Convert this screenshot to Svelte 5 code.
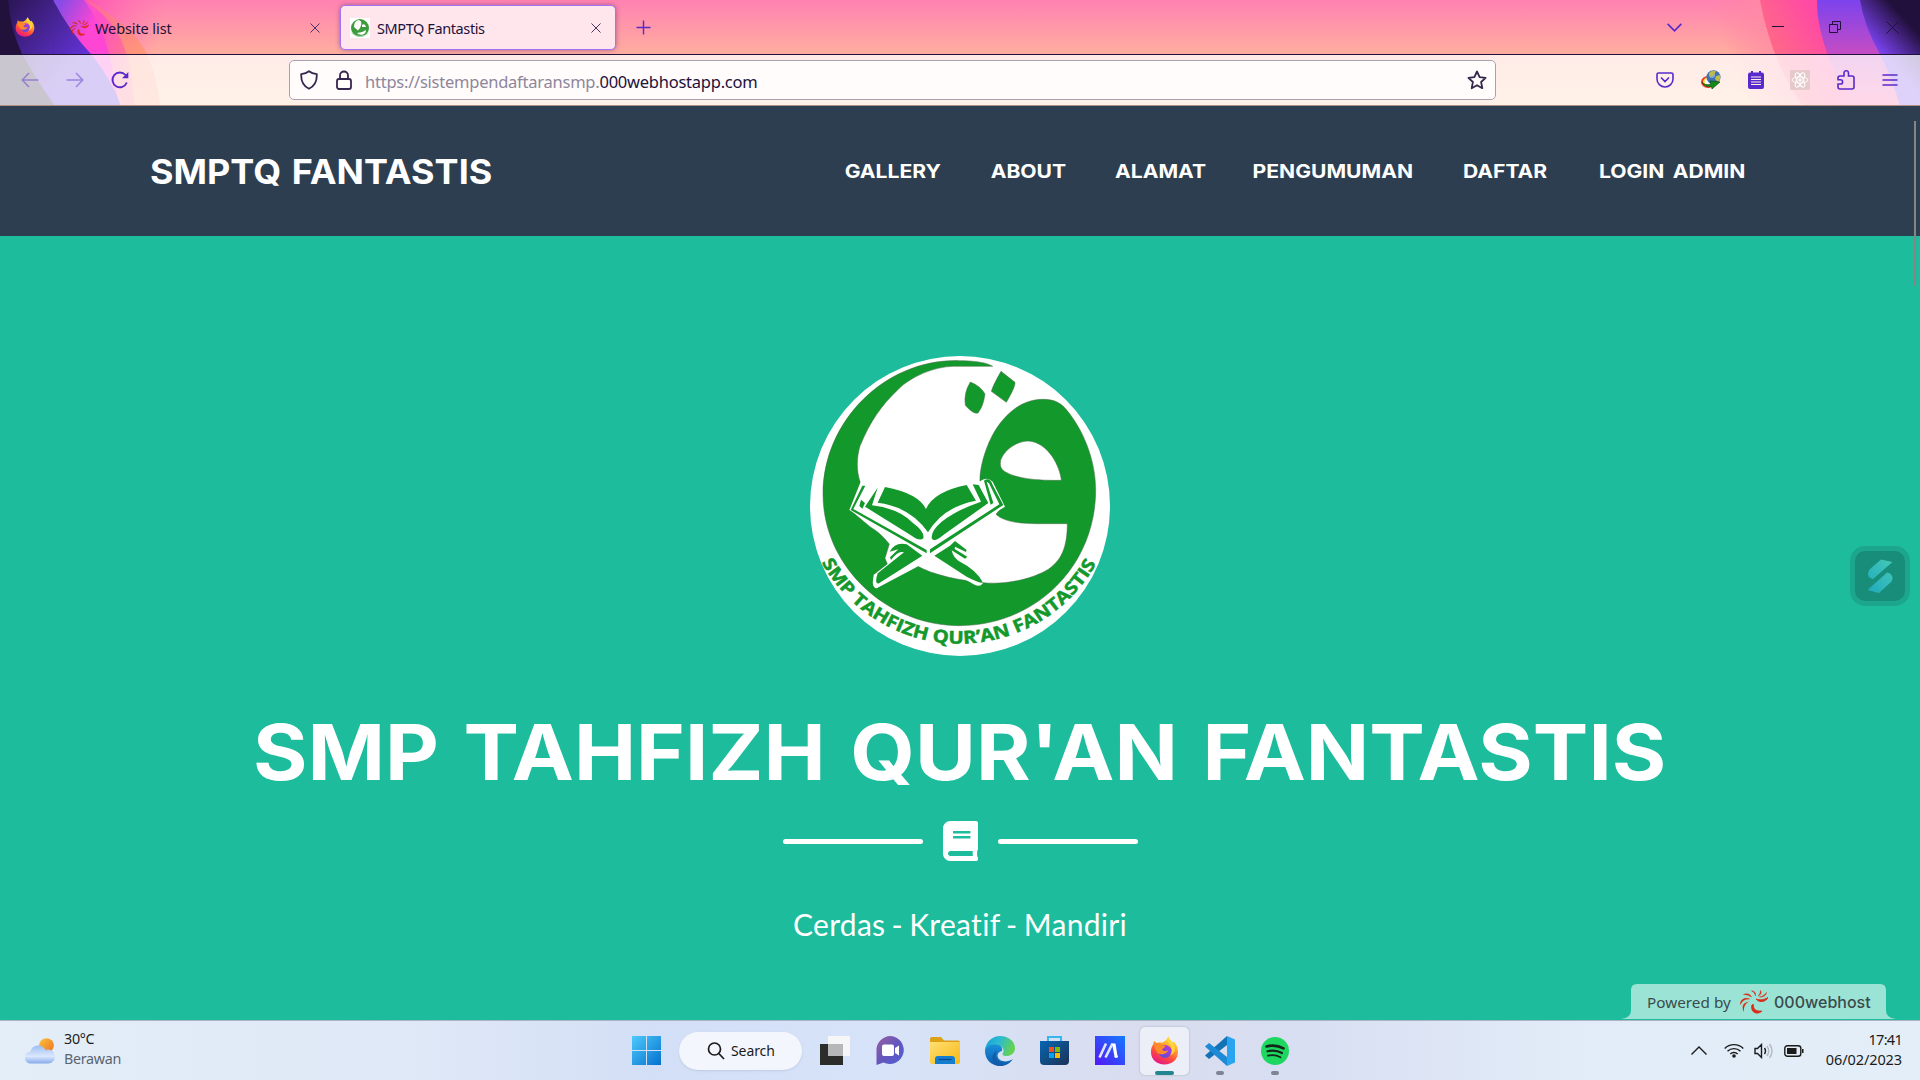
<script>
  const links = ['Gallery', 'About', 'Alamat', 'Pengumuman', 'Daftar', 'Login Admin'];
</script>

{#snippet firefox()}
  <svg viewBox="0 0 30 30" class="fit">
    <defs>
      <linearGradient id="fxa" x1=".8" y1="0" x2=".3" y2="1">
        <stop offset="0" stop-color="#fff44f" /><stop offset=".35" stop-color="#ffa52a" />
        <stop offset=".68" stop-color="#ff4a3f" /><stop offset="1" stop-color="#e5148a" />
      </linearGradient>
      <linearGradient id="fxb" x1=".8" y1="0" x2=".2" y2="1">
        <stop offset="0" stop-color="#b833e1" /><stop offset="1" stop-color="#5b4fd6" />
      </linearGradient>
    </defs>
    <path d="M19 .5c1 3 3 4.500 4.500 6.500.6-.2.700-1 .500-1.800 3 2.500 5 6.500 5 11.300C29 24 23 29.500 15 29.500S1 24 1 16.500c0-3.500 1-6 2.400-8 .1-1.500.4-2.600 1-3.500.8 1.200 1.700 2 3 2.300C9 6.500 10.500 6.700 12 7c3-.6 4.500-2.500 7-6.500z" fill="url(#fxa)" />
    <circle cx="15.500" cy="16" r="6.800" fill="url(#fxb)" />
    <path d="M5 8c3-1.500 6-.6 7.500 1.500 1.500.4 3 .2 3.500 1-.5 1.800-3 1.800-3.500 3.500.8 2 4 2 6.500.5-1 4-7 6-11 3C5.500 15 4 11 5 8z" fill="#ff8a2a" />
    <path d="M19 .5c-2 3-1 6 1.500 8.500 3 3 3 8 0 11 6-2 7-8 3-13C22 5 20 3.500 19 .5z" fill="#ffd53c" />
  </svg>
{/snippet}

{#snippet swirl()}
  <svg viewBox="0 0 28 24" class="fit">
    <g fill="#dc2a17">
      <path d="M28 7.500c-2 4-8 6-12 1.500 4 1.500 8 1 12-1.500z" stroke="#dc2a17" stroke-width=".9" />
      <path d="M22 21c-4 4-11 2.500-10.500-5 .6-1.500 1.500-2 2-1.500C13 19 16 21.500 22 21z" stroke="#dc2a17" stroke-width=".7" />
      <path d="M4 22c-3-5-1-10 5.500-10.500C5 13.500 3.500 17 4 22z" />
      <path d="M.3 14.500C.5 9.500 4.500 7 9.500 9 5 8.800 2.500 10.500.3 14.500zM3.500 4.500c3.500-1.500 6.500-.5 8 2.500-2.500-1.700-5-2.500-8-2.500zM11.500.8c3 .2 4.500 2 4 5-.6-2.300-1.700-3.800-4-5zM20.500.5c1.500 2 .3 4.300-2.300 5.500 1.500-1.700 2.300-3.300 2.300-5.500zM26.500 2.500c-.5 3.200-3.300 4.900-7 4.500 3-.6 5.200-2 7-4.500z" stroke="#dc2a17" stroke-width=".5" />
    </g>
  </svg>
{/snippet}

<div class="screen">
  <section class="browser">
    <svg class="art" viewBox="0 0 1920 106" preserveAspectRatio="none">
      <defs>
        <linearGradient id="sky" x1="0" y1="0" x2="0" y2="1"><stop offset="0" stop-color="#ff82b2" /><stop offset=".5" stop-color="#ffad9f" /><stop offset="1" stop-color="#ffc59f" /></linearGradient>
        <linearGradient id="pl" gradientUnits="userSpaceOnUse" x1="85" y1="0" x2="165" y2="20"><stop offset="0" stop-color="#ff55b4" /><stop offset="1" stop-color="#ff6fb0" stop-opacity="0" /></linearGradient>
        <linearGradient id="ol" gradientUnits="userSpaceOnUse" x1="100" y1="0" x2="135" y2="54"><stop offset="0" stop-color="#ff6f92" /><stop offset="1" stop-color="#ff946f" /></linearGradient>
        <linearGradient id="il" gradientUnits="userSpaceOnUse" x1="96" y1="30" x2="134" y2="46"><stop offset="0" stop-color="#ff4bd0" /><stop offset="1" stop-color="#ff6f90" /></linearGradient>
        <linearGradient id="pu" gradientUnits="userSpaceOnUse" x1="10" y1="0" x2="80" y2="60"><stop offset="0" stop-color="#2c1657" /><stop offset="1" stop-color="#6232d4" /></linearGradient>
        <linearGradient id="vi" gradientUnits="userSpaceOnUse" x1="58" y1="5" x2="92" y2="25"><stop offset="0" stop-color="#854ce6" /><stop offset="1" stop-color="#ff45d4" /></linearGradient>
        <linearGradient id="rb" gradientUnits="userSpaceOnUse" x1="1715" y1="20" x2="1775" y2="0"><stop offset="0" stop-color="#ff7fa0" stop-opacity="0" /><stop offset="1" stop-color="#ff8ca5" /></linearGradient>
        <linearGradient id="rp" gradientUnits="userSpaceOnUse" x1="1762" y1="40" x2="1812" y2="10"><stop offset="0" stop-color="#ff6b85" /><stop offset="1" stop-color="#ff4aa4" /></linearGradient>
        <linearGradient id="rv" x1="0" y1="0" x2="0" y2="1"><stop offset="0" stop-color="#7c43ee" /><stop offset=".5" stop-color="#c44cc4" /><stop offset="1" stop-color="#ff5ea0" /></linearGradient>
        <linearGradient id="rd" gradientUnits="userSpaceOnUse" x1="1876" y1="45" x2="1905" y2="19"><stop offset="0" stop-color="#7740e8" /><stop offset="1" stop-color="#22103c" /></linearGradient>
      </defs>
      <path fill="url(#sky)" d="M0 0h1920v106H0z" />
      <path fill="url(#pl)" d="M52 0h130v54H92z" />
      <path fill="url(#ol)" opacity=".8" d="M88 0q24 15 38 27 14 13 21 27 11 24 13 52h-36z" />
      <path fill="url(#il)" opacity=".85" d="M84 0q26 16 38 42 12 28 12 64h-14L70 20z" />
      <path fill="url(#vi)" d="M52 0h32q17 22 25 54l11 52h-10z" />
      <path fill="url(#pu)" d="M0 0h53q17 32 38 54 20 24 30 52H0z" />
      <path fill="#22113b" d="M0 0h8q2 28 14 54 16 28 33 52H0z" />
      <path fill="url(#rb)" d="M1700 0h220v106h-160q-35-20-60-106z" />
      <path fill="url(#rp)" d="M1760 0h160v106h-117q-32-45-43-106z" />
      <path fill="url(#rv)" d="M1817 0h50l40 106h-56q-35-65-34-106z" />
      <path fill="url(#rd)" d="M1860 0h60v106h-20q-8-28-20-52-16-28-20-54z" />
    </svg>

    <header class="tabs">
      <span class="brandmark">{@render firefox()}</span>
      <div class="tab">
        <span class="fav">{@render swirl()}</span><span class="t1">Website list</span>
        <svg class="x" viewBox="0 0 10 10"><path d="M.5.500l9 9M9.500.5l-9 9" /></svg>
      </div>
      <div class="tab active">
        <span class="fav school">
          <svg viewBox="0 0 20 20" class="fit"><circle cx="10" cy="10" r="9" fill="#3d9d3d" /><path d="M7 2.500c4-1 5 2 4 5-.5 2-2 4-3 5L4 9c0-3 1-5.500 3-6.500zM12 7q3-2 4 2l-4 0zM7 15q5 0 9-3 0 3-3 4.500-4 1-6-1.500z" fill="#fff" /><path d="M1.500 15Q10 22 18.500 15" stroke="#b9dcb9" fill="none" /></svg>
        </span><span class="t2">SMPTQ Fantastis</span>
        <svg class="x" viewBox="0 0 10 10"><path d="M.5.500l9 9M9.500.5l-9 9" /></svg>
      </div>
      <svg class="plus" viewBox="0 0 16 16"><path d="M8 .5v15M.5 8h15" /></svg>
      <div class="window">
        <svg class="down" viewBox="0 0 16 9"><path d="M.7.700L8 8 15.300.700" /></svg>
        <svg width="12" height="12" viewBox="0 0 12 12"><path d="M0 5.500h12" /></svg>
        <svg width="12" height="12" viewBox="0 0 12 12"><path d="M.5 3.500h8v8h-8zM3.500 3.500v-3h8v8h-3" /></svg>
        <svg width="13" height="13" viewBox="0 0 13 13"><path d="M.5.500l12 12M12.500.5l-12 12" /></svg>
      </div>
    </header>

    <div class="toolbar">
      <div class="history">
        <svg class="dim" viewBox="0 0 18 16"><path d="M17.500 8H1.500M8 1L1.200 8 8 15" /></svg>
        <svg class="dim" viewBox="0 0 18 16"><path d="M.5 8h16M10 1l6.800 7L10 15" /></svg>
        <svg class="reload" viewBox="0 0 18 18"><path d="M15.800 11.500A7.400 7.400 0 1 1 14.500 4" /><path d="M17.300 1v6.300h-6.300z" fill="#592acb" stroke="none" /></svg>
      </div>
      <div class="address">
        <svg class="shield" viewBox="0 0 18 20"><path d="M9 1.200c2.500 2 4.800 2.500 7.800 2.900.3 6.500-1 11.500-7.800 14.700C2.200 15.600.9 10.600 1.200 4.100 4.200 3.700 6.500 3.200 9 1.200z" /></svg>
        <svg class="lock" viewBox="0 0 16 20"><path d="M4 9V5.500a4 4 0 0 1 8 0V9" /><rect x="1" y="9" width="14" height="10" rx="2" /></svg>
        <span class="url">https://sistempendaftaransmp.<b>000webhostapp.com</b></span>
        <svg class="star" viewBox="0 0 20 20"><path d="M10 1.500l2.600 5.600 6 .7-4.500 4.200 1.200 6.200-5.300-3-5.300 3L5.900 12 1.400 7.800l6-.7z" /></svg>
      </div>
      <div class="addons">
        <svg width="18" height="16" viewBox="0 0 18 16"><path d="M2.500 1h13a1.500 1.500 0 0 1 1.500 1.500V7a8 8 0 0 1-16 0V2.500A1.500 1.500 0 0 1 2.500 1zM5 5.500l4 4 4-4" /></svg>
        <svg class="solid" width="20" height="20" viewBox="0 0 20 20">
          <ellipse cx="7" cy="12" rx="7" ry="6" fill="#e93b24" /><ellipse cx="7.500" cy="12" rx="5.500" ry="4.700" fill="#ffe04a" /><ellipse cx="8" cy="12" rx="4" ry="3.300" fill="#fff" />
          <circle cx="12.500" cy="7.300" r="7" fill="#3f70b4" /><circle cx="11" cy="5" r="3" fill="#9fc3ea" opacity=".7" /><path d="M8 3q3-3 7-2l-2 4-4 2zM15 6l4-1q1 4-2 7l-3-3z" fill="#c0bb45" />
          <path d="M1 12q3 4 9 2l-1-3 10 1-8 7-.5-2.500Q4 18 1 12z" fill="#138a16" stroke="#07450b" stroke-width=".6" />
        </svg>
        <svg class="solid" width="16" height="18" viewBox="0 0 16 18"><path d="M2 1.500h1V0h2v1.500h6V0h2v1.500h1a2 2 0 0 1 2 2V16a2 2 0 0 1-2 2H2a2 2 0 0 1-2-2V3.500a2 2 0 0 1 2-2z" fill="#592acb" /><path d="M3 6h10M3 8.500h10M3 11h10M3 13.500h10" stroke="#fff0e8" /></svg>
        <svg class="solid" width="20" height="20" viewBox="0 0 20 20"><rect width="20" height="20" rx="1" fill="#e5c9cb" /><g fill="none" stroke="#fff" stroke-width=".9"><ellipse cx="10" cy="10" rx="8" ry="3" /><ellipse cx="10" cy="10" rx="8" ry="3" transform="rotate(60 10 10)" /><ellipse cx="10" cy="10" rx="8" ry="3" transform="rotate(120 10 10)" /></g><circle cx="10" cy="10" r="1.500" fill="#fff" /></svg>
        <svg width="18" height="20" viewBox="0 0 18 20"><path d="M7 5V3a2 2 0 0 1 4.500 0v3H15a2 2 0 0 1 2 2v9a2 2 0 0 1-2 2H3a2 2 0 0 1-2-2v-3h2.500a2 2 0 0 0 0-4.200H1V8a2 2 0 0 1 2-2h4z" /></svg>
        <svg width="16" height="12" viewBox="0 0 16 12"><path d="M.5 1h15M.5 6h15M.5 11h15" /></svg>
      </div>
    </div>
  </section>

  <nav class="nav">
    <span class="brand">SMPTQ FANTASTIS</span>
    <ul>{#each links as link}<li>{link}</li>{/each}</ul>
  </nav>

  <main class="hero">
    <svg class="logo" viewBox="60 48 900 900">
      <defs><path id="arc" d="M92 662A472 472 0 0 0 924 662" /></defs>
      <circle cx="510" cy="498" r="450" fill="#fff" />
      <g fill="#13982b" stroke="#4c6b4c" stroke-width="1.500">
        <path d="M608 79C590 66 545 62 508 62 290 55 99 240 99 462 99 680 290 857 508 857 735 857 917 680 917 450 917 360 880 270 830 210 806 180 780 178 755 178 690 180 640 225 605 290 580 340 568 395 570 425L640 495 618 523C640 545 690 551 740 551H832C831 610 822 655 775 688 730 715 660 733 590 729 510 722 430 706 378 676L255 745 250 705 292 672 285 655 298 612C280 590 265 575 240 560L180 510 212 430C198 395 200 350 210 318 240 245 275 195 325 148 360 112 430 80 490 79z" />
        <path d="M541 126Q572 138 585 162 580 200 564 219 550 224 526 196 520 160 541 126zM633 94L675 127Q677 140 649 187L604 154Q608 138 633 94z" />
      </g>
      <path d="M632 360C645 325 685 303 715 303 775 307 810 380 814 421 740 422 680 416 645 395 630 385 630 375 632 360z" fill="#fff" stroke="#4c6b4c" stroke-width="1.500" />
      <path d="M212 425L178 510 410 645 645 500 608 425Q590 408 570 424L410 490 285 430z" fill="#fff" />
      <path d="M298 625Q310 608 340 610L408 640 440 645 490 604Q520 615 533 630L530 655 505 650 580 725Q575 742 555 735L420 660 260 745Q242 742 252 705L295 672z" fill="#fff" />
      <g fill="#13982b">
        <path d="M285 441Q385 460 408 507 430 455 530 435L558 482Q460 500 414 577 360 500 263 488z" />
        <path d="M263 443L246 496Q325 505 368 548 405 575 400 595 390 605 365 587L225 500zM548 433L573 485Q500 510 455 545 420 575 426 597 435 607 460 585L595 489 566 435z" />
        <path d="M217 437h9L190 507 410 630v10L182 510zM213 479l12 10-8 17-9-8z" />
        <path d="M582 422Q600 410 608 435L640 495 420 640v-12L628 493 597 430 590 425 610 489 602 494z" />
        <path d="M299 635Q315 605 350 613L397 647 267 730Q252 735 263 700L310 662 342 637Q325 630 303 660L300 652 325 628zM433 647L480 617 495 603 530 630 528 636 495 620 494 627 532 650 525 656 485 631Q490 655 510 665 560 690 579 728 570 731 530 710z" />
      </g>
      <text class="motto"><textPath href="#arc" startOffset="6" textLength="1002" lengthAdjust="spacingAndGlyphs">SMP TAHFIZH QUR’AN FANTASTIS</textPath></text>
    </svg>
    <h1>SMP TAHFIZH QUR'AN FANTASTIS</h1>
    <div class="divider">
      <i></i>
      <svg width="35" height="40" viewBox="0 0 448 512"><path fill="#fff" d="M448 360V24c0-13.300-10.700-24-24-24H96C43 0 0 43 0 96v320c0 53 43 96 96 96h328c13.300 0 24-10.700 24-24v-16c0-7.500-3.500-14.300-8.900-18.700-4.200-15.400-4.200-59.300 0-74.700 5.400-4.300 8.900-11.100 8.900-18.600zM128 134c0-3.300 2.700-6 6-6h212c3.300 0 6 2.700 6 6v20c0 3.300-2.700 6-6 6H134c-3.300 0-6-2.700-6-6v-20zm0 64c0-3.300 2.700-6 6-6h212c3.300 0 6 2.700 6 6v20c0 3.300-2.700 6-6 6H134c-3.300 0-6-2.700-6-6v-20zm253.400 250H96c-17.700 0-32-14.300-32-32 0-17.600 14.400-32 32-32h285.400c-1.900 17.100-1.900 46.900 0 64z" /></svg>
      <i></i>
    </div>
    <p>Cerdas - Kreatif - Mandiri</p>

    <div class="scroll"></div>
    <div class="widget">
      <svg width="26" height="34" viewBox="0 0 26 34"><defs><linearGradient id="wg" x1="1" y1="0" x2="0" y2="1"><stop offset="0" stop-color="#45c9b6" /><stop offset="1" stop-color="#1fa9bd" /></linearGradient></defs><path fill="url(#wg)" d="M14 .5L25.500 3 6 20Q1 19 1 14.500 1 12 3 10zM20 13.500q5.500 1 5.500 6 0 2-2 4L12 34 .5 31z" /></svg>
    </div>
    <div class="powered">
      <svg class="plate" viewBox="0 0 275 35"><path d="M0 35q10-1 10-9V6q0-6 6-6h243q6 0 6 6v20q0 8 10 9z" fill="#9be4d5" /></svg>
      <span class="by">Powered by</span><span class="sw">{@render swirl()}</span><span class="host">000webhost</span>
    </div>
  </main>

  <footer class="taskbar">
    <div class="weather">
      <svg width="30" height="26" viewBox="0 0 30 26">
        <defs><linearGradient id="sun" x1="0" y1="0" x2="1" y2="1"><stop offset="0" stop-color="#f9c23c" /><stop offset="1" stop-color="#f3701f" /></linearGradient><linearGradient id="cl" x1="0" y1="0" x2="0" y2="1"><stop offset="0" stop-color="#9dbdf0" /><stop offset=".6" stop-color="#dbe8ff" /><stop offset="1" stop-color="#86a9ea" /></linearGradient></defs>
        <circle cx="21.500" cy="7.500" r="7.300" fill="url(#sun)" /><path d="M6 25.500a6 6 0 0 1-.5-12 8 8 0 0 1 15-1.500 7 7 0 1 1 3 13.500z" fill="url(#cl)" />
      </svg>
      <div class="report"><span class="deg">30°C</span><span class="sky">Berawan</span></div>
    </div>

    <div class="apps">
      <span class="app"><svg width="29" height="29" viewBox="0 0 29 29"><defs><linearGradient id="win" gradientUnits="userSpaceOnUse" x1="0" y1="0" x2="29" y2="29"><stop offset="0" stop-color="#4ccbfb" /><stop offset="1" stop-color="#0670cf" /></linearGradient></defs><path fill="url(#win)" d="M0 0h14v14H0zM15 0h14v14H15zM0 15h14v14H0zM15 15h14v14H15z" /></svg></span>
      <span class="search"><svg width="18" height="18" viewBox="0 0 18 18"><circle cx="7.500" cy="7" r="6" /><path d="M11.800 11.500L17 17" /></svg>Search</span>
      <span class="app"><svg width="30" height="29" viewBox="0 0 30 29"><path fill="#2c2c2b" d="M0 8h23v21H0z" /><path fill="#f6f6f6" d="M8 0h22v20H8z" /><path fill="#b6b7b9" d="M8 8h15v12H8z" /></svg></span>
      <span class="app"><svg width="30" height="29" viewBox="0 0 30 29"><defs><linearGradient id="chat" x1="0" y1="0" x2="1" y2="1"><stop offset="0" stop-color="#9c5f9f" /><stop offset=".5" stop-color="#6457bd" /><stop offset="1" stop-color="#505fd8" /></linearGradient></defs><path fill="url(#chat)" d="M15.500 0a14 14 0 1 1-7 26.500L1.500 29V15A14 14 0 0 1 15.500 0z" /><rect x="7" y="8.500" width="12" height="11.500" rx="2" fill="#fff" /><path d="M20 12l4-2.500v10L20 17z" fill="#fff" /></svg></span>
      <span class="app"><svg width="30" height="27" viewBox="0 0 30 27"><defs><linearGradient id="fold" x1="0" y1="0" x2="1" y2="1"><stop offset="0" stop-color="#ffdf72" /><stop offset="1" stop-color="#f7b815" /></linearGradient></defs><path fill="#dea014" d="M2 0h9l3 3.500h14a2 2 0 0 1 2 2V12H0V2a2 2 0 0 1 2-2z" /><path fill="url(#fold)" d="M0 5h30v20a2 2 0 0 1-2 2H2a2 2 0 0 1-2-2z" /><path fill="#137ed0" d="M5 27v-5q0-3 3-3h14q3 0 3 3v5z" /><path d="M8.500 22.500h13" stroke="#084b8a" stroke-width="1.200" /></svg></span>
      <span class="app"><svg width="30" height="30" viewBox="0 0 30 30"><defs><linearGradient id="eg" x1="0" y1="0" x2="1" y2=".3"><stop offset="0" stop-color="#159ed4" /><stop offset=".5" stop-color="#2cbbd2" /><stop offset="1" stop-color="#62d252" /></linearGradient><linearGradient id="eb" x1="0" y1="0" x2="0" y2="1"><stop offset="0" stop-color="#1b94dd" /><stop offset="1" stop-color="#0b5cae" /></linearGradient></defs><path fill="url(#eb)" d="M0 15C0 8 6 7 10 7c6 1 8 5 7 8-5 1-6 6-2 9 4 2.500 9 1.500 13-1-3 4.500-7.500 7-13 7C6.500 30 0 23.500 0 15z" /><path fill="url(#eg)" d="M.3 13C1.300 5.500 7.500 0 15 0c9 0 15 6 15 12 0 5.500-4.500 8-8.500 8-3 0-5-1.300-3.500-3 2-3-1-8-7-8.500C6 8 2 10 .3 13z" /><path fill="#155ca8" d="M12 14c-4 7 1 15 9 14.500Q16 31 11 29 3 22 12 14z" /></svg></span>
      <span class="app"><svg width="29" height="29" viewBox="0 0 29 29"><defs><linearGradient id="st" x1="0" y1="0" x2="1" y2="1"><stop offset="0" stop-color="#0667b3" /><stop offset="1" stop-color="#1d3156" /></linearGradient></defs><path d="M8 6V1h13v5" fill="none" stroke="#35b6ec" stroke-width="2" /><path fill="url(#st)" d="M0 5h29v20a4 4 0 0 1-4 4H4a4 4 0 0 1-4-4z" /><path fill="#f25022" d="M9 11h5v5H9z" /><path fill="#7fba00" d="M15 11h5v5h-5z" /><path fill="#00a4ef" d="M9 17h5v5H9z" /><path fill="#ffb900" d="M15 17h5v5h-5z" /></svg></span>
      <span class="app"><svg width="30" height="29" viewBox="0 0 30 29"><defs><linearGradient id="ma" x1="0" y1="1" x2="1" y2="0"><stop offset="0" stop-color="#5316f5" /><stop offset="1" stop-color="#147bff" /></linearGradient></defs><path fill="url(#ma)" d="M0 0h30v29H0z" /><path d="M4.500 21.500L11 7.500M10.500 21.500l7-14" stroke="#dfe5ff" stroke-width="2.600" /><path d="M17 7.500h3.500l2.200 14h-3z" fill="#fff" /><circle cx="21.200" cy="20.300" r="1.500" fill="#fff" /></svg></span>
      <span class="app open"><span class="ff">{@render firefox()}</span></span>
      <span class="app run"><svg width="30" height="30" viewBox="0 0 30 30"><path fill="#1173b8" d="M22 0v9L4 23 0 19.500z" /><path fill="#1c8ad6" d="M22 30v-9L4 7 0 10.500z" /><path fill="#29a4f0" d="M22 0l8 3.500v23L22 30z" /></svg></span>
      <span class="app run"><svg width="28" height="28" viewBox="0 0 28 28"><circle cx="14" cy="14" r="14" fill="#1ed760" /><g fill="none" stroke="#14251a" stroke-linecap="round"><path d="M5.500 9.500q9-2.500 17 1.800" stroke-width="2.600" /><path d="M6.500 14.300q8-2 14.500 1.700" stroke-width="2.200" /><path d="M7 18.700q7-1.500 12.500 1.500" stroke-width="1.800" /></g></svg></span>
    </div>

    <div class="tray">
      <svg width="16" height="9" viewBox="0 0 16 9"><path d="M.5 8.500L8 1l7.500 7.500" /></svg>
      <svg width="20" height="15" viewBox="0 0 20 15"><path d="M.7 5.500a13 13 0 0 1 18.600 0M3.500 8.300a9.200 9.200 0 0 1 13 0M6.300 11a5.200 5.200 0 0 1 7.400 0" /><circle cx="10" cy="13" r="1.800" fill="#1b1b1b" stroke="none" /></svg>
      <svg width="20" height="16" viewBox="0 0 20 16"><path d="M1 5.500h2.500l4-4v13l-4-4H1zM10.500 5q2 3 0 6" /><path d="M13 3q3.500 5 0 10M15.500 1q5 7 0 14" stroke="#b3bac4" /></svg>
      <svg width="20" height="12" viewBox="0 0 20 12"><rect x=".8" y=".8" width="16" height="10.400" rx="2.500" /><path d="M3 3h9.500v6H3zM18 4h1.500v4H18z" fill="#1b1b1b" stroke="none" /></svg>
      <div class="clock"><span class="time">17:41</span><span class="date">06/02/2023</span></div>
    </div>
  </footer>
</div>

<style>
  :global(body) { margin: 0; overflow: hidden; }
  .screen { width: 1920px; height: 1080px; display: flex; flex-direction: column; font-family: "Noto Sans", "Open Sans", sans-serif; overflow: hidden; }
  svg { display: block; flex: none; }
  .fit { width: 100%; height: 100%; }

  .browser { position: relative; height: 106px; flex: none; }
  .art { position: absolute; inset: 0; width: 1920px; height: 106px; }
  .tabs, .toolbar { position: relative; display: flex; align-items: center; box-sizing: border-box; }
  .tabs { height: 55px; border-bottom: 1px solid #22113b; padding-left: 15px; }
  .brandmark { width: 20px; height: 20px; margin-right: 18px; }
  .tab { width: 276px; height: 45px; box-sizing: border-box; display: flex; align-items: center; color: #22113b; font-size: 14.500px; }
  .tab:not(.active) { width: 287px; height: 54px; padding: 2px 20px 0 16px; border-left: 1px solid #4a2a8a66; }
  .active { background: #ffe6ec; border: 1.500px solid #a274f5; border-radius: 5px; box-shadow: 0 0 5px #7b3f80aa; padding: 1px 14px 0 9px; margin-top: 1px; }
  .fav { width: 19px; height: 18px; margin-right: 6px; }
  .school { width: 20px; height: 20px; background: #fff; margin-right: 7px; }
  .t1 { letter-spacing: -.1px; }
  .t2 { letter-spacing: -.4px; }
  .x { width: 10px; height: 10px; margin-left: auto; stroke: #4c3560; fill: none; }
  .plus { width: 15px; height: 15px; margin-left: 20px; margin-top: 1px; stroke: #592acb; stroke-width: 1.500; fill: none; }
  .window { margin-left: auto; display: flex; align-items: center; padding-right: 21px; }
  .window svg { fill: none; stroke: #22113b; margin-right: 45px; }
  .window svg:last-child { margin-right: 0; }
  .window .down { width: 15px; height: 9px; stroke: #592acb; stroke-width: 1.800; margin-right: 90px; }

  .toolbar { height: 51px; background: #ffffffc2; border-bottom: 1px solid #b08d80; padding: 0 22px 0 21px; }
  .history { display: flex; align-items: center; gap: 27px; width: 268px; }
  .history svg { width: 18px; height: 16px; fill: none; stroke: #592acb; stroke-width: 1.500; }
  .history .dim { opacity: .45; }
  .history .reload { height: 18px; stroke-width: 1.900; }
  .address { width: 1207px; height: 40px; box-sizing: border-box; border: 1px solid #aaa0b4; border-radius: 5px; background: #fffcfb; display: flex; align-items: center; padding: 0 8px 0 10px; }
  .address svg { fill: none; stroke: #35264d; stroke-width: 1.800; stroke-linejoin: round; }
  .shield { width: 18px; height: 20px; margin-right: 18px; }
  .lock { width: 16px; height: 20px; margin-right: 13px; }
  .url { font-size: 16.500px; letter-spacing: -.24px; color: #8e869b; padding-top: 2px; }
  .url b { font-weight: 400; color: #22113b; }
  .star { width: 20px; height: 20px; margin-left: auto; }
  .addons { flex: 1; display: flex; align-items: center; justify-content: space-between; padding-left: 160px; }
  .addons svg { fill: none; stroke: #592acb; stroke-width: 1.600; }
  .addons .solid { stroke: none; stroke-width: 1; }

  .nav { height: 130px; flex: none; box-sizing: border-box; background: #2c3e50; color: #fff; display: flex; align-items: center; justify-content: space-between; padding: 0 174px 0 150px; font-family: Inter, sans-serif; font-weight: 700; }
  .brand { font-size: 34px; word-spacing: 2px; transform: scaleX(1.058); transform-origin: left; }
  .nav ul { list-style: none; margin: 0; padding: 0; display: grid; grid-template-columns: 131.500px 112px 124px 189.500px 122.500px 132.500px; font-size: 19px; word-spacing: 3px; white-space: nowrap; text-transform: uppercase; transform: scaleX(1.11); transform-origin: right; }

  .hero { position: relative; flex: 1; min-height: 0; background: #1cbc9c; color: #fff; display: flex; flex-direction: column; align-items: center; }
  .logo { width: 300px; height: 300px; margin-top: 120px; }
  .motto { font: 700 53px "Open Sans", sans-serif; fill: #13982b; stroke: #13982b; stroke-width: 1.500; }
  h1 { margin: 48px 0 0; font: 700 77px/96px Inter, sans-serif; white-space: nowrap; word-spacing: 4.500px; transform: scaleX(1.081); }
  .divider { display: flex; align-items: center; gap: 20px; margin-top: 21px; }
  .divider i { width: 140px; height: 5px; border-radius: 3px; background: #fff; }
  p { margin: 41px 0 0; font: 400 30px/45px Lato, sans-serif; font-variant-ligatures: none; letter-spacing: .3px; word-spacing: -1.800px; }
  .scroll { position: absolute; right: 4px; top: -115px; width: 2px; height: 165px; background: #848489; }
  .widget { position: absolute; left: 1850px; top: 310px; width: 50px; height: 50px; border: 5px solid #1ca78c; border-radius: 15px; background: #178d7a; display: flex; align-items: center; justify-content: center; }
  .powered { position: absolute; left: 1621px; bottom: 1px; width: 275px; height: 35px; box-sizing: border-box; padding-left: 26px; display: flex; align-items: center; color: #3b4a4c; font-size: 15.300px; }
  .plate { position: absolute; inset: 0; width: 275px; height: 35px; }
  .by, .sw, .host { position: relative; }
  .by { width: 93px; white-space: nowrap; }
  .sw { width: 28px; height: 24px; margin-right: 6px; }
  .host { font: 500 16px Inter, sans-serif; }

  .taskbar { position: relative; height: 60px; flex: none; box-sizing: border-box; border-top: 1px solid #aab4c4; background: linear-gradient(90deg, #e3eef8 0, #dfe8f7 22%, #d3dff6 34%, #d7e3f8 46%, #d9dcee 60%, #d8dff2 68%, #e2ecf8 82%, #e4eef8 100%); display: grid; grid-template-columns: 619px 684px 1fr; }
  .weather { display: flex; align-items: center; gap: 9px; padding-left: 25px; font-size: 14.300px; line-height: 20px; }
  .weather span { display: block; }
  .report, .clock { padding-bottom: 3px; }
  .deg { letter-spacing: -.3px; color: #1b1b1b; }
  .sky { letter-spacing: -.3px; color: #5b6470; }
  .apps { display: flex; align-items: center; }
  .app { position: relative; width: 55px; height: 48px; display: flex; align-items: center; justify-content: center; }
  .search { width: 123px; height: 38px; margin: 0 5px; border-radius: 19px; background: #f3f6fd; box-shadow: 0 1px 2px #8fa0c055; display: flex; align-items: center; gap: 6px; box-sizing: border-box; padding-left: 28px; font-size: 14px; letter-spacing: -.1px; color: #1b1b1b; }
  .search svg { fill: none; stroke: #1b1b1b; stroke-width: 1.700; }
  .ff { width: 29px; height: 29px; z-index: 1; }
  .open::before { content: ""; position: absolute; inset: 0 3px; border-radius: 5px; background: #eceff8; box-shadow: 0 0 2px #9aa; }
  .open::after, .run::after { content: ""; position: absolute; bottom: 0; width: 8px; height: 4px; border-radius: 2px; background: #7d8592; }
  .open::after { width: 19px; background: #23858f; }
  .tray { display: flex; align-items: center; justify-content: flex-end; padding-right: 18px; }
  .tray svg { fill: none; stroke: #1b1b1b; stroke-width: 1.400; margin-right: 10px; }
  .tray svg:first-child { margin-right: 17px; }
  .clock { width: 88px; text-align: right; font-size: 14.500px; line-height: 20px; color: #1b1b1b; }
  .clock span { display: block; }
  .date { letter-spacing: -.1px; }
  .time { letter-spacing: -.7px; }
</style>
